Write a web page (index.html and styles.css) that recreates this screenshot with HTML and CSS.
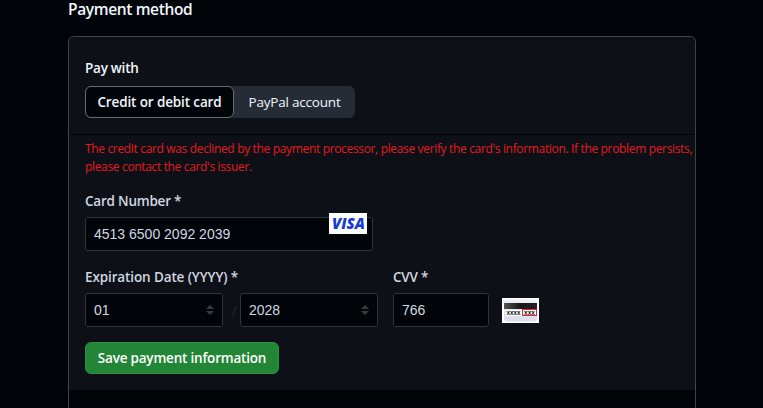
FILE: index.html
```html
<!DOCTYPE html>
<html lang="en">
<head>
    <meta charset="UTF-8">
    <meta name="viewport" content="width=device-width, initial-scale=1.0">
    <title>Payment method</title>
    <link rel="stylesheet" href="styles.css">
</head>
<body>
    <h2>Payment method</h2>
    <div class="box">
        <div class="pay-with">
            <h3>Pay with</h3>
            <div class="segmented">
                <button class="segment selected">Credit or debit card</button>
                <button class="segment">PayPal account</button>
            </div>
        </div>
        <form class="card-form">
            <p class="error">The credit card was declined by the payment processor, please verify the card's information. If the problem persists,<br>please contact the card's issuer.</p>
            <div class="form-group card-number">
                <label for="card-number">Card Number *</label>
                <input type="text" id="card-number" value="4513 6500 2092 2039">
                <svg class="visa" width="38" height="21" viewBox="0 0 38 21">
                    <rect width="38" height="21" fill="#fff"/>
                    <text x="3" y="16" textLength="33" lengthAdjust="spacingAndGlyphs">VISA</text>
                </svg>
            </div>
            <div class="form-row">
                <div class="form-group expiration">
                    <label for="month">Expiration Date (YYYY) *</label>
                    <div class="selects">
                        <div class="select">
                            <select id="month"><option>01</option></select>
                            <svg class="arrows" width="8" height="10" viewBox="0 0 8 10"><path d="M0 4 4 0l4 4zM0 6h8L4 10z"/></svg>
                        </div>
                        <span class="slash">/</span>
                        <div class="select">
                            <select id="year"><option>2028</option></select>
                            <svg class="arrows" width="8" height="10" viewBox="0 0 8 10"><path d="M0 4 4 0l4 4zM0 6h8L4 10z"/></svg>
                        </div>
                    </div>
                </div>
                <div class="form-group cvv">
                    <label for="cvv">CVV *</label>
                    <input type="text" id="cvv" value="766">
                </div>
                <svg class="cvv-hint" width="37" height="25" viewBox="0 0 37 25">
                    <defs>
                        <linearGradient id="stripe"><stop offset="0" stop-color="#55555a"/><stop offset=".5" stop-color="#161618"/><stop offset="1" stop-color="#222"/></linearGradient>
                        <linearGradient id="card" x2="0" y2="1"><stop offset="0" stop-color="#f0f0f6"/><stop offset="1" stop-color="#d9dcec"/></linearGradient>
                    </defs>
                    <rect width="37" height="25" fill="#fff"/>
                    <rect x="2" y="1.5" width="33" height="22" rx="3" fill="url(#card)"/>
                    <rect x="2" y="5" width="33" height="6" fill="url(#stripe)"/>
                    <rect x="4" y="12" width="16" height="6" fill="#fff"/>
                    <rect x="20.5" y="11.5" width="14" height="6" fill="#fff" stroke="#f0202a"/>
                    <text x="4.5" y="16.5" textLength="14" lengthAdjust="spacingAndGlyphs">xxxx</text>
                    <text x="22" y="16.5" textLength="11" lengthAdjust="spacingAndGlyphs">xxx</text>
                </svg>
            </div>
            <button type="button" class="save">Save payment information</button>
        </form>
    </div>
</body>
</html>
```

FILE: styles.css
```css
body {
    margin: 0;
    background-color: #010409;
    color: #f0f6fc;
    font-family: "Open Sans", "Noto Sans", sans-serif;
    font-size: 14px;
}
h2 {
    margin: 0 68px;
    height: 36px;
    font-size: 15.5px;
    font-weight: 600;
    line-height: 18px;
    letter-spacing: -0.36px;
}
h3 {
    margin: 0 0 7px;
    font-size: 13.5px;
    font-weight: 600;
    line-height: 21px;
    letter-spacing: -0.25px;
}
.box {
    box-sizing: border-box;
    width: 628px;
    height: 372px;
    margin-left: 68px;
    border: 1px solid #3d444d;
    border-bottom: none;
    border-radius: 6px 6px 0 0;
    overflow: hidden;
}
.pay-with {
    padding: 21px 16px 16px;
    background-color: #0d1117;
    border-bottom: 1px solid #010409;
}
.segmented {
    display: flex;
    width: 270px;
    height: 32px;
    border-radius: 6px;
    background-color: #262c36;
}
.segment {
    flex: 1;
    padding: 0;
    border: none;
    background: none;
    color: #f0f6fc;
    font-family: inherit;
    font-size: 13.5px;
    letter-spacing: -0.2px;
}
.segment.selected {
    flex: none;
    width: 149px;
    border: 1px solid #656c76;
    border-radius: 6px;
    background-color: #010409;
    font-weight: 600;
    letter-spacing: -0.13px;
}
.card-form {
    height: 250px;
    padding: 5px 0 0 16px;
    background-color: #0d1117;
}
.error {
    margin: 0 0 15px;
    color: #e5191f;
    font-size: 12px;
    line-height: 18px;
    letter-spacing: -0.34px;
    white-space: nowrap;
}
.form-group label {
    display: block;
    margin-bottom: 5px;
    color: #d1d7e0;
    font-size: 13.5px;
    font-weight: 600;
    line-height: 21px;
    letter-spacing: -0.22px;
}
.form-group.expiration label {
    letter-spacing: -0.12px;
}
.form-group input,
.form-group select {
    display: block;
    box-sizing: border-box;
    width: 100%;
    height: 34px;
    padding: 0 8px;
    border: 1px solid #2f353d;
    border-radius: 3px;
    background-color: #010409;
    color: #d1d7e0;
    font-family: "Liberation Sans", Arial, sans-serif;
    font-size: 14px;
    appearance: none;
}
.card-number {
    position: relative;
    width: 288px;
    margin-bottom: 16px;
}
.visa {
    position: absolute;
    top: 22px;
    right: 6px;
}
.visa text {
    fill: #1a3ccc;
    font: italic 800 15px "Open Sans", sans-serif;
}
.form-row {
    display: flex;
    align-items: flex-end;
    margin-bottom: 15px;
}
.selects {
    display: flex;
    align-items: center;
}
.select {
    position: relative;
    width: 138px;
}
.arrows {
    position: absolute;
    top: 12px;
    right: 9px;
    fill: #3a3a3a;
}
.slash {
    width: 17px;
    padding-left: 9px;
    box-sizing: border-box;
    color: #252a31;
}
.cvv {
    width: 96px;
    margin-left: 15px;
}
.cvv-hint {
    margin: 0 0 4px 13px;
}
.cvv-hint text {
    fill: #111;
    font: bold 7px "Liberation Sans", sans-serif;
}
.save {
    display: block;
    width: 194px;
    height: 32px;
    padding: 0;
    border: 1px solid #2b8f44;
    border-radius: 6px;
    background-color: #238636;
    color: #fff;
    font-family: inherit;
    font-size: 13.5px;
    font-weight: 600;
    letter-spacing: -0.2px;
}
```
